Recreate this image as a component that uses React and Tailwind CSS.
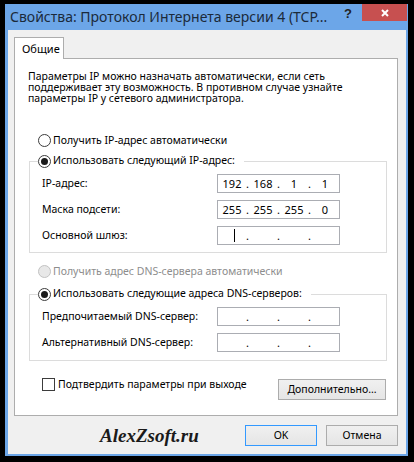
import React from "react";

// Win8 "IPv4 properties" dialog

function Radio({ checked, disabled }) {
    return (
        <span
            className={`w-[13px] h-[13px] rounded-full border flex items-center justify-center shrink-0 ${
                disabled ? "border-[#c2c2c2] bg-[#e8e8e8]" : "border-[#3c3c3c] bg-white"
            }`}
        >
            {checked && <span className="w-[7px] h-[7px] rounded-full bg-[#1a1a1a]" />}
        </span>
    );
}

function IpField({ parts = ["", "", "", ""], caret = false }) {
    return (
        <div className="w-[123px] h-[19px] border border-[#abadb3] bg-white flex items-center pl-[2px] leading-[17px] text-[11px]">
            {parts.map((p, i) => (
                <React.Fragment key={i}>
                    {i > 0 && <span className="w-[7px] text-center">.</span>}
                    <span className="w-[24px] flex justify-center">
                        {caret && i === 0 ? <span className="w-px h-[13px] bg-black ml-[4px]" /> : p}
                    </span>
                </React.Fragment>
            ))}
        </div>
    );
}

function FieldRow({ label, children }) {
    return (
        <div className="flex items-center h-[19px]">
            <span className="w-[175px]">{label}</span>
            {children}
        </div>
    );
}

function Group({ legend, children, className = "" }) {
    return (
        <fieldset className={`w-[358px] ml-[1px] border border-[#dcdcdc] pl-[8px] ${className}`}>
            <legend className="pr-[9px]">
                <span className="flex items-center gap-[2px] h-[14px]">
                    <Radio checked />
                    {legend}
                </span>
            </legend>
            <div className="pl-[4px] pt-[6px] flex flex-col gap-[7px]">{children}</div>
        </fieldset>
    );
}

function Button({ children, primary = false, className = "" }) {
    return (
        <button
            type="button"
            className={`h-[21px] border bg-gradient-to-b from-[#f0f0f0] to-[#e5e5e5] flex items-center justify-center ${
                primary ? "border-[#3399ff]" : "border-[#acacac]"
            } ${className}`}
        >
            {children}
        </button>
    );
}

export default function App() {
    return (
        <div className="w-[414px] h-[462px] bg-black pt-[4px] pl-[5px] pr-[6px] pb-[6px] font-['Noto_Sans',sans-serif] text-[10.5px] text-black">
            <div className="h-full bg-[#6ca6e8] flex flex-col">
                {/* title bar */}
                <div className="h-[26px] flex items-start shrink-0">
                    <div className="flex-1 pl-[5px] pt-[3px] text-[14px] leading-[20px] text-[#1b2a3a] whitespace-nowrap overflow-hidden">
                        Свойства: Протокол Интернета версии 4 (TCP...
                    </div>
                    <div className="w-[8px] pt-[2px] text-[13px] leading-[16px] font-bold font-['Liberation_Sans',sans-serif] text-[#222]">
                        ?
                    </div>
                    <div className="w-[45px] h-[17px] mr-[1px] ml-[10px] bg-[#c75050] flex items-center justify-center">
                        <svg width="8" height="8" viewBox="0 0 8 8">
                            <path d="M1 1L7 7M7 1L1 7" stroke="white" strokeWidth="2" />
                        </svg>
                    </div>
                </div>

                {/* client area */}
                <div className="flex-1 bg-[#f0f0f0] ml-[3px] mr-[2px] mb-[2px] flex flex-col">
                    <div className="pl-[6px] pt-[7px]">
                        <div className="relative z-10 -mb-px w-[50px] h-[22px] bg-white border-t border-l border-r border-[#adadad] pl-[7px] pt-[3px] text-[11px]">
                            Общие
                        </div>
                        <div className="w-[384px] h-[358px] bg-white border border-[#adadad] pt-[12px] px-[13px]">
                            <p className="leading-[11px]">
                                Параметры IP можно назначать автоматически, если сеть
                                <br />
                                поддерживает эту возможность. В противном случае узнайте
                                <br />
                                параметры IP у сетевого администратора.
                            </p>

                            <div className="mt-[30px] ml-[10px] flex items-center gap-[2px] h-[13px]">
                                <Radio />
                                <span>Получить IP-адрес автоматически</span>
                            </div>

                            <Group legend="Использовать следующий IP-адрес:" className="mt-[7px] pb-[7px]">
                                <FieldRow label="IP-адрес:">
                                    <IpField parts={["192", "168", "1", "1"]} />
                                </FieldRow>
                                <FieldRow label="Маска подсети:">
                                    <IpField parts={["255", "255", "255", "0"]} />
                                </FieldRow>
                                <FieldRow label="Основной шлюз:">
                                    <IpField caret />
                                </FieldRow>
                            </Group>

                            <div className="mt-[12px] ml-[10px] flex items-center gap-[2px] h-[13px] text-[#8d8d8d]">
                                <Radio disabled />
                                <span>Получить адрес DNS-сервера автоматически</span>
                            </div>

                            <Group legend="Использовать следующие адреса DNS-серверов:" className="mt-[9px] pb-[8px]">
                                <FieldRow label="Предпочитаемый DNS-сервер:">
                                    <IpField />
                                </FieldRow>
                                <FieldRow label="Альтернативный DNS-сервер:">
                                    <IpField />
                                </FieldRow>
                            </Group>

                            <div className="mt-[17px] flex items-start">
                                <div className="ml-[14px] flex items-center gap-[3px] h-[13px]">
                                    <span className="w-[13px] h-[13px] border border-[#3c3c3c] bg-white" />
                                    <span>Подтвердить параметры при выходе</span>
                                </div>
                                <Button className="ml-auto -mr-[2px] mt-px w-[108px]">Дополнительно...</Button>
                            </div>
                        </div>
                    </div>

                    <div className="mt-[9px] flex items-center pl-[92px] pr-[8px]">
                        <span className="font-['Liberation_Serif',serif] italic font-bold text-[19px] leading-[21px] text-[#1a1a1a]">
                            AlexZsoft.ru
                        </span>
                        <div className="ml-auto flex gap-[9px]">
                            <Button primary className="w-[72px]">OK</Button>
                            <Button className="w-[72px]">Отмена</Button>
                        </div>
                    </div>
                </div>
            </div>
        </div>
    );
}
